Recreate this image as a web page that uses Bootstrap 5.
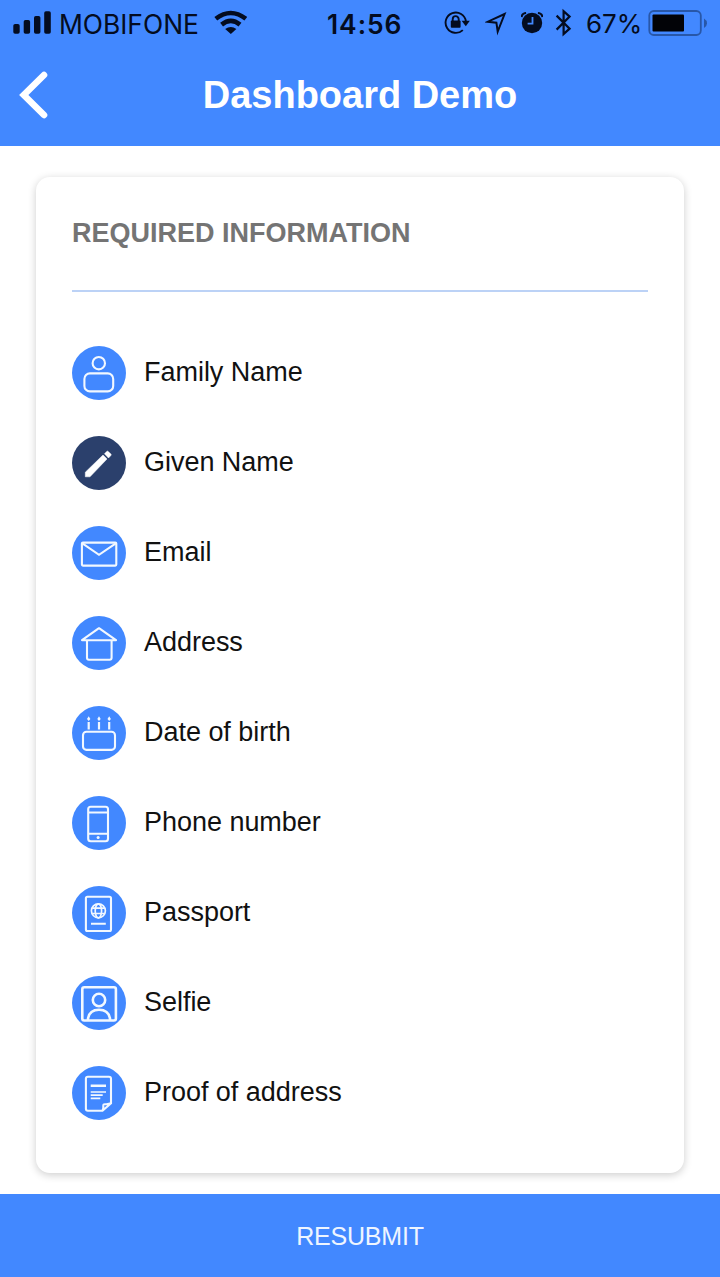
<!DOCTYPE html>
<html lang="en">
<head>
<meta charset="utf-8">
<meta name="viewport" content="width=device-width, initial-scale=1">
<title>Dashboard Demo</title>
<link href="https://cdn.jsdelivr.net/npm/bootstrap@5.3.0/dist/css/bootstrap.min.css" rel="stylesheet">
<style>
:root{--brand:#4288ff}
body{font-family:"Liberation Sans",Arial,sans-serif;height:1277px;overflow:hidden;background:#fff}
.brand-bg{background:var(--brand)}
.app-head{height:146px}
.status-line{height:46px;padding-left:13px;font-family:Inter,sans-serif;color:#040c20}
.status-line svg,.status-line span{flex:none;display:block;white-space:nowrap}
.status-line span{line-height:44px;padding-top:2px}
.carrier{width:155px;padding-left:8px;font-size:26.4px}
.clock{width:117px;font-size:26.4px;font-weight:600;letter-spacing:.95px}
.charge{width:62px;font-size:26px}
.title-line{height:98px;display:grid;grid-template-columns:100px 1fr 100px}
.back-btn{padding:0 0 0 18px}
.app-title{font-size:38px;letter-spacing:-.02px;line-height:44px}
.info-card{margin:31px 36px 21px;padding:36px;border:0;border-radius:14px;height:996px;box-shadow:0 2px 8px rgba(0,0,0,.2)}
.info-title{font-size:27px;line-height:41px;color:#747474}
.rule-line{height:2px;background:#bcd2f6;margin:36px 0 54px}
.info-row{height:54px;margin-bottom:36px;font-size:27px;letter-spacing:-.03px;color:#111}
.info-row span{margin:-2px 0 0 18px;line-height:40px}
.ico{width:54px;height:54px;border-radius:50%;fill:none;stroke:#f2f8ff;stroke-width:2.1;background:var(--brand);flex:none}
.ico-dark{background:#2b406c}
.submit-btn{height:83px;padding-top:8px;font-size:25px;color:#eef5ff;letter-spacing:-.2px}
</style>
</head>
<body class="d-flex flex-column">
<header class="app-head brand-bg flex-shrink-0">
  <div class="status-line d-flex align-items-center">
    <svg width="38" height="46" fill="currentColor"><rect x=".3" y="24" width="6.4" height="9.8" rx="1.8"/><rect x="10.7" y="20" width="6.4" height="13.8" rx="1.8"/><rect x="21" y="16" width="6.4" height="17.8" rx="1.8"/><rect x="31.2" y="11.2" width="6.6" height="22.6" rx="1.8"/></svg>
    <span class="carrier">MOBIFONE</span>
    <svg class="ms-2" width="33" height="46" fill="none" stroke="currentColor" stroke-width="4.6"><path d="M1.800 18.800Q16.800 7.200 31.800 18.800"/><path d="M7.600 24.600Q16.800 17.200 26 24.600"/><path d="M11.200 29q5.600-4.200 11.200 0l-5.600 5z" fill="currentColor" stroke="none"/></svg>
    <span class="clock" style="margin-left:80px">14:56</span>
    <svg width="26" height="46" fill="none" stroke="currentColor" stroke-width="1.9"><path d="M18.800 30.100A10.200 10.200 0 1 1 21.900 21.300"/><path d="M17.600 20.800h8.200l-4 5.400z" fill="currentColor" stroke="none"/><rect x="6.800" y="20.600" width="9.800" height="7.200" rx="1" fill="currentColor" stroke="none"/><path d="M8.700 21.500v-2.200a3 3.200 0 0 1 6 0v2.200"/></svg>
    <svg style="margin-left:15px" width="22" height="46" fill="none" stroke="currentColor" stroke-width="2"><path d="M19.600 14L2.800 21.700l8.600 1 1.300 9z"/></svg>
    <svg style="margin-left:14px" width="22" height="46" fill="currentColor"><circle cx="11" cy="23" r="10.200"/><path d="M.5 17a5 5 0 0 1 4.600-4M21.500 17a5 5 0 0 0-4.600-4" fill="none" stroke="currentColor" stroke-width="2.200"/><path d="M11.500 17v6.700H6.600" fill="none" stroke="#4288ff" stroke-width="1.800"/></svg>
    <svg style="margin-left:12px" width="18" height="46" fill="none" stroke="currentColor" stroke-width="2.200"><path d="M1.600 15.600l13 13-6 5.400V11.200l6 5.400-13 13"/></svg>
    <span class="charge" style="margin-left:13px">67%</span>
    <svg width="60" height="46"><rect x="1.300" y="11" width="51.500" height="24" rx="4.500" fill="none" stroke="#2857a8" stroke-width="1.800"/><rect x="4.500" y="14.500" width="31.500" height="17" rx="1" fill="#020307"/><path d="M56 18.500q3 1.800 3 4.700T56 28z" fill="#2857a8"/></svg>
  </div>
  <div class="title-line align-items-center">
    <button class="btn border-0 back-btn text-start" type="button" aria-label="Back"><svg class="d-block" width="32" height="50" fill="none" stroke="#fff" stroke-width="6.600" stroke-linecap="round"><path d="M26 5L5.800 25l20.200 20"/></svg></button>
    <h1 class="app-title fw-bold text-white text-center m-0">Dashboard Demo</h1>
  </div>
</header>
<main class="flex-grow-1">
  <section class="card info-card">
    <h2 class="info-title fw-bold m-0">REQUIRED INFORMATION</h2>
    <div class="rule-line"></div>
    <div class="info-row d-flex align-items-center"><svg class="ico"><circle cx="26.800" cy="17.200" r="6.200"/><rect x="12.400" y="27.400" width="28.800" height="18" rx="5.500"/></svg><span>Family Name</span></div>
    <div class="info-row d-flex align-items-center"><svg class="ico ico-dark"><path d="M13.300 40.800v-4.600L31 19l4 4L18 40.800zM32.400 17.700l2.400-2.300q.7-.7 1.400 0l2.700 2.700q.7.7 0 1.400L36.500 22z" fill="#fff" stroke="#fff" stroke-width=".5"/></svg><span>Given Name</span></div>
    <div class="info-row d-flex align-items-center"><svg class="ico"><rect x="9.900" y="16.600" width="34.400" height="23" rx="1"/><path d="M10.400 17.300L27 28.800l16.800-11.500"/></svg><span>Email</span></div>
    <div class="info-row d-flex align-items-center"><svg class="ico" stroke-linejoin="round"><path d="M27 12.200L10 24.200h34zM15 24v17.700q0 2 2 2h20.600q2 0 2-2V24"/></svg><span>Address</span></div>
    <div class="info-row d-flex align-items-center"><svg class="ico"><rect x="11" y="25.700" width="32" height="18.200" rx="3.500"/><path d="M16.700 16v7.500M27 16v7.500M37.200 16v7.500" stroke-width="2.200"/><path d="M16.700 10.300l1.700 2.800-1.700 2-1.700-2zM27 10.300l1.700 2.800-1.700 2-1.700-2zM37.200 10.300l1.700 2.800-1.700 2-1.700-2z" fill="#f2f8ff" stroke="none"/></svg><span>Date of birth</span></div>
    <div class="info-row d-flex align-items-center"><svg class="ico"><rect x="16.200" y="10.700" width="19.800" height="34.600" rx="2.500"/><path d="M16 16.500h20M16 37.700h20"/><circle cx="26.100" cy="41.400" r="1.500" fill="#f2f8ff" stroke="none"/></svg><span>Phone number</span></div>
    <div class="info-row d-flex align-items-center"><svg class="ico"><rect x="13.900" y="10.700" width="25.100" height="34.300" rx="1.500"/><g style="stroke-width:1.7"><circle cx="26.400" cy="24.800" r="7"/><ellipse cx="26.400" cy="24.800" rx="3.200" ry="7"/><path d="M20.200 22.200h12.400M20.200 27.500h12.400"/></g><path d="M19 37.700h14.800"/></svg><span>Passport</span></div>
    <div class="info-row d-flex align-items-center"><svg class="ico"><g style="stroke-width:2.6"><rect x="10.300" y="11.200" width="33.600" height="33.300" rx="2"/><circle cx="27" cy="24" r="6.200"/><path d="M15.800 44.500Q16.500 33.800 27 33.800T38.200 44.500"/></g></svg><span>Selfie</span></div>
    <div class="info-row d-flex align-items-center mb-0"><svg class="ico"><path d="M30.500 44.700H15.900q-2 0-2-2v-30q0-2 2-2H37q2 0 2 2v24.600zM30.500 44.700q1.200-2 .8-4.800-.1-1.800 1.700-1.700 3.800.2 6-.9"/><path d="M18.700 19.700H34" stroke-width="2.600"/><path d="M18.700 26H34M18.700 29.200h12M18.700 32.400h9.600" style="stroke-width:1.7"/></svg><span>Proof of address</span></div>
  </section>
</main>
<button class="btn submit-btn brand-bg rounded-0 border-0 w-100 flex-shrink-0" type="button">RESUBMIT</button>
<script src="https://cdn.jsdelivr.net/npm/bootstrap@5.3.0/dist/js/bootstrap.bundle.min.js"></script>
</body>
</html>
